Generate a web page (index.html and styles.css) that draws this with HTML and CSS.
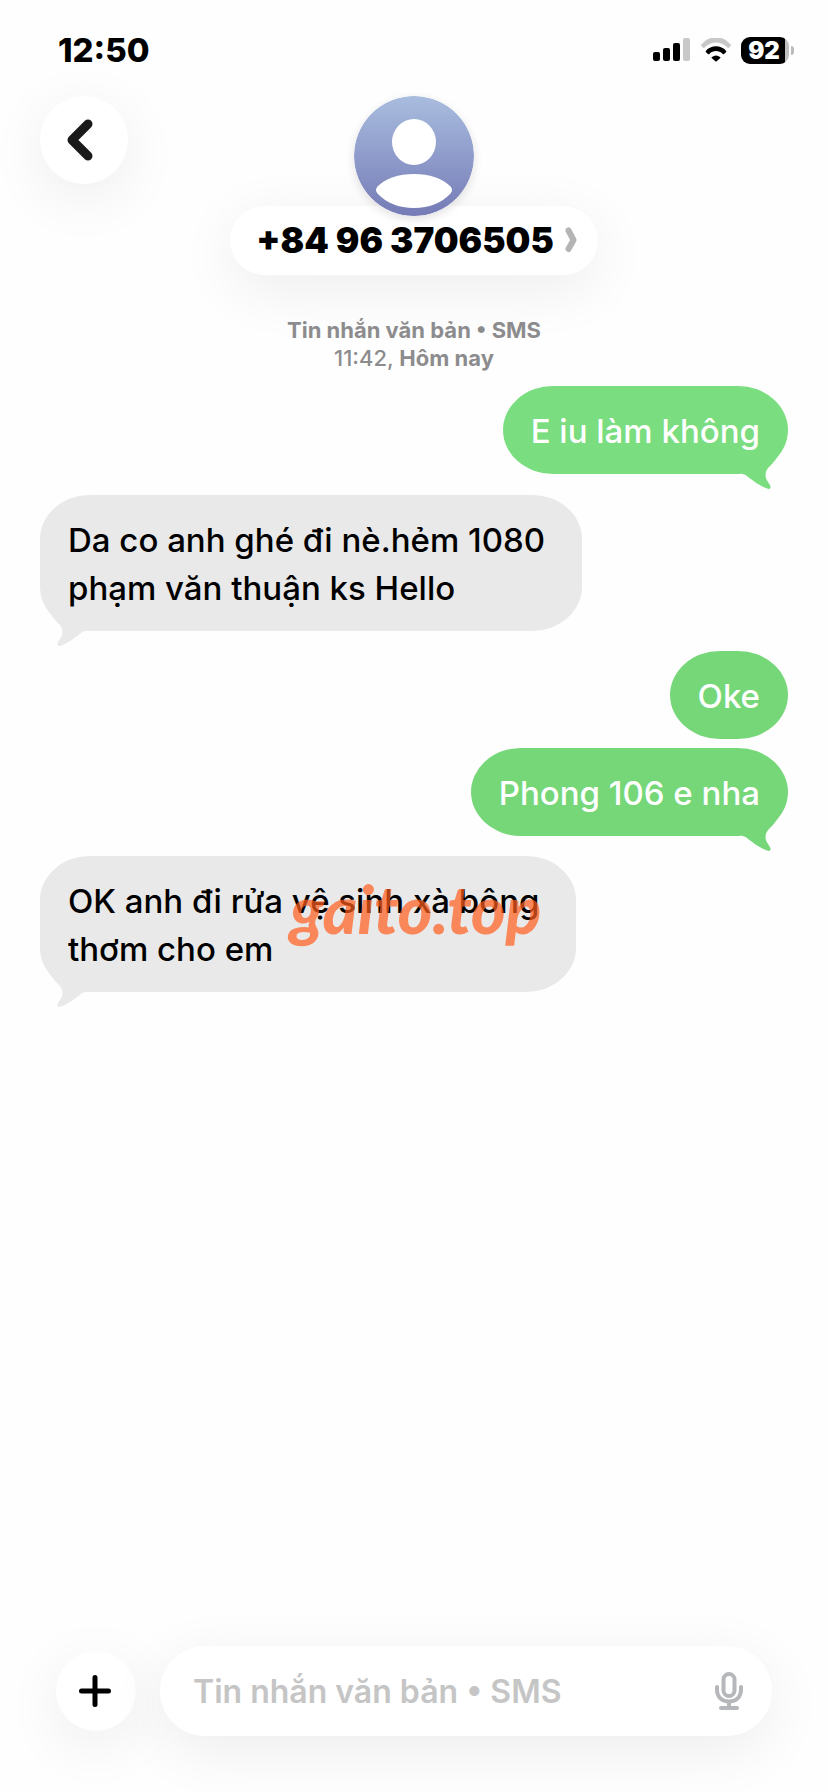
FILE: index.html
```html
<!DOCTYPE html>
<html lang="vi">
<head>
<meta charset="utf-8">
<meta name="viewport" content="width=device-width, initial-scale=1">
<title>+84 96 3706505</title>
<link rel="stylesheet" href="styles.css">
</head>
<body>
<div class="status-bar">
  <time class="clock">12:50</time>
  <div class="indicators">
    <svg class="signal" viewBox="0 0 38 24" aria-hidden="true">
      <rect x="0" y="14" width="7" height="9" rx="2"/>
      <rect x="10" y="10" width="7" height="13" rx="2"/>
      <rect x="20" y="5" width="7" height="18" rx="2"/>
      <rect class="dim" x="30" y="0" width="7" height="23" rx="2"/>
    </svg>
    <svg class="wifi" viewBox="0 0 32 24" aria-hidden="true">
      <path class="dim" d="M1.2 8.2C9.2-1.8 22.8-1.8 30.8 8.2Q31.300 8.900 30.600 9.500L28.800 11.200Q28 11.700 27.300 11C20.800 4.200 11.200 4.200 4.700 11Q4 11.700 3.200 11.200L1.400 9.500Q.7 8.900 1.200 8.200Z" transform="translate(0 -1.500)"/>
      <path d="M5.800 13C11 6.800 21 6.800 26.200 13Q26.600 13.600 26 14.200L24 16Q23.300 16.500 22.700 15.900C19 12.100 13 12.100 9.300 15.900Q8.700 16.500 8 16L6 14.200Q5.400 13.600 5.800 13Z"/>
      <path d="M11.700 19.200Q16 15.600 20.300 19.200Q20.700 19.600 20.300 20L16.700 23.200Q16 23.700 15.300 23.200L11.700 20Q11.300 19.600 11.700 19.200Z"/>
    </svg>
    <div class="battery"><span class="battery-level">92</span></div>
  </div>
</div>

<header class="chat-header">
  <button class="back" type="button" aria-label="Quay lại">
    <svg viewBox="0 0 28 44" aria-hidden="true"><path d="M22 6 6 22 22 38"/></svg>
  </button>
  <div class="contact">
    <svg class="avatar" viewBox="0 0 120 120" aria-hidden="true">
      <defs>
        <linearGradient id="sky" x1="0" y1="0" x2="0" y2="1">
          <stop offset="0" stop-color="#a9bddf"/>
          <stop offset="1" stop-color="#757bb6"/>
        </linearGradient>
      </defs>
      <circle cx="60" cy="60" r="60" fill="url(#sky)"/>
      <ellipse cx="60" cy="46" rx="22" ry="23" fill="#fff"/>
      <path fill="#fff" d="M23.500 90.500C31 82.500 45 78 60 78S89 82.500 96.500 90.500Q99.500 94 96.500 97.500C88 107 75 112 60 112S32 107 23.500 97.500Q20.500 94 23.500 90.500Z"/>
    </svg>
    <button class="contact-name" type="button">
      <span>+84 96 3706505</span>
      <svg viewBox="0 0 12 28" aria-hidden="true"><path d="M3.500 4.500 8.500 14 3.500 23"/></svg>
    </button>
  </div>
</header>

<main class="thread">
  <p class="stamp"><b>Tin nhắn văn bản • SMS</b><br>11:42, <b>Hôm nay</b></p>
  <div class="bubble sent light">E iu làm không
    <svg class="tail" viewBox="0 0 46 36" aria-hidden="true"><path d="M6 20C10 20 14 25 22 30 27 33 32 36 34 34.500 35.500 33 34 31 32 28 28 23 29 16 34 12 37 9 41 4 43 0L6 0Z"/></svg>
  </div>
  <div class="bubble received">Da co anh ghé đi nè.hẻm 1080<br>phạm văn thuận ks Hello
    <svg class="tail" viewBox="0 0 46 36" aria-hidden="true"><path d="M6 20C10 20 14 25 22 30 27 33 32 36 34 34.500 35.500 33 34 31 32 28 28 23 29 16 34 12 37 9 41 4 43 0L6 0Z"/></svg>
  </div>
  <div class="bubble sent">Oke</div>
  <div class="bubble sent follow">Phong 106 e nha
    <svg class="tail" viewBox="0 0 46 36" aria-hidden="true"><path d="M6 20C10 20 14 25 22 30 27 33 32 36 34 34.500 35.500 33 34 31 32 28 28 23 29 16 34 12 37 9 41 4 43 0L6 0Z"/></svg>
  </div>
  <div class="bubble received">OK anh đi rửa vệ sinh xà bông<br>thơm cho em
    <svg class="tail" viewBox="0 0 46 36" aria-hidden="true"><path d="M6 20C10 20 14 25 22 30 27 33 32 36 34 34.500 35.500 33 34 31 32 28 28 23 29 16 34 12 37 9 41 4 43 0L6 0Z"/></svg>
    <span class="watermark">gaito.top</span>
  </div>
</main>

<form class="composer">
  <button class="add" type="button" aria-label="Thêm">
    <svg viewBox="0 0 32 32" aria-hidden="true"><path d="M16 2.500V29.500M2.500 16H29.500"/></svg>
  </button>
  <div class="field">
    <input class="field-input" type="text" placeholder="Tin nhắn văn bản • SMS" aria-label="Tin nhắn văn bản">
    <button class="mic" type="button" aria-label="Đọc chính tả">
      <svg viewBox="0 0 28 38" aria-hidden="true">
        <rect x="8.500" y="2" width="11" height="22" rx="5.500"/>
        <path d="M2 15V17.500C2 25 7 29.500 14 29.500S26 25 26 17.500V15M14 29.500V36M6 36H22"/>
      </svg>
    </button>
  </div>
</form>
</body>
</html>
```
FILE: styles.css
```css
* {
  box-sizing: border-box;
}

body {
  display: flex;
  flex-direction: column;
  min-height: 100vh;
  margin: 0;
  overflow-x: hidden;
  background: #fefefe;
  color: #000;
  font-family: Inter, "Liberation Sans", sans-serif;
}

button,
input {
  margin: 0;
  padding: 0;
  border: 0;
  background: none;
  color: inherit;
  font: inherit;
}

svg {
  display: block;
}

.status-bar {
  display: flex;
  align-items: center;
  justify-content: space-between;
  height: 96px;
  padding: 4px 34px 0 58px;
}

.clock {
  font-size: 33px;
  font-weight: 800;
}

.indicators {
  display: flex;
  align-items: center;
  gap: 9px;
}

.signal {
  width: 38px;
  height: 24px;
}

.wifi {
  width: 32px;
  height: 24px;
}

.dim {
  fill: #c8c8c8;
}

.battery {
  position: relative;
  width: 48px;
  height: 27px;
  border-radius: 9px;
  margin-right: 5px;
  background: linear-gradient(90deg, #000 92%, #c0c0c0 92%);
  color: #fff;
  text-align: center;
}

.battery::after {
  content: "";
  position: absolute;
  top: 9px;
  right: -5px;
  width: 3px;
  height: 9px;
  border-radius: 0 4px 4px 0;
  background: #bbb;
}

.battery-level {
  display: block;
  padding-right: 2px;
  font-size: 24px;
  font-weight: 900;
  line-height: 27px;
}

.chat-header {
  display: grid;
  grid-template-columns: 88px 1fr 88px;
  align-items: start;
  padding: 0 40px;
}

.back,
.add,
.field,
.contact-name {
  background: #fff;
  box-shadow: 0 14px 60px rgba(0, 0, 0, 0.07);
}

.back {
  display: grid;
  place-items: center;
  width: 88px;
  height: 88px;
  padding-right: 8px;
  border-radius: 50%;
}

.back svg {
  width: 28px;
  height: 44px;
  fill: none;
  stroke: #1a1a1a;
  stroke-width: 9;
  stroke-linecap: round;
  stroke-linejoin: round;
}

.contact {
  display: flex;
  flex-direction: column;
  align-items: center;
}

.avatar {
  z-index: 1;
  width: 120px;
  height: 120px;
  margin-bottom: -10px;
  border-radius: 50%;
  box-shadow: 0 3px 10px rgba(0, 0, 0, 0.12);
}

.contact-name {
  display: flex;
  align-items: center;
  gap: 11px;
  height: 69px;
  padding: 0 21px 2px 26px;
  border-radius: 35px;
  font-size: 35px;
  font-weight: 900;
  white-space: nowrap;
}

.contact-name svg {
  width: 12px;
  height: 28px;
  fill: none;
  stroke: #b4b4b4;
  stroke-width: 6;
  stroke-linecap: round;
  stroke-linejoin: round;
}

.thread {
  display: flex;
  flex: 1;
  flex-direction: column;
  align-items: flex-start;
  padding: 41px 40px;
}

.stamp {
  align-self: center;
  margin: 0 0 14px;
  color: #8c8c8e;
  font-size: 22px;
  font-weight: 500;
  line-height: 28px;
  text-align: center;
}

.stamp b {
  font-weight: 700;
}

.bubble {
  position: relative;
  margin-bottom: 20px;
  padding: 21px 28px 19px;
  border-radius: 50px / 44px;
  font-size: 33px;
  font-weight: 500;
  line-height: 48px;
}

.sent {
  align-self: flex-end;
  background: #76d779;
  color: #fff;
  fill: #76d779;
}

.light {
  margin-bottom: 21px;
  background: #7add7f;
  fill: #7add7f;
}

.follow {
  margin-top: -11px;
}

.received {
  padding-right: 37px;
  background: #e9e9e9;
  fill: #e9e9e9;
}

.tail {
  position: absolute;
  right: 6px;
  bottom: -16px;
  width: 46px;
  height: 36px;
}

.received .tail {
  right: auto;
  left: 6px;
  transform: scaleX(-1);
}

.watermark {
  position: absolute;
  top: 20px;
  left: 250px;
  color: rgba(255, 92, 28, 0.7);
  font-family: "Lato", cursive;
  font-size: 66px;
  font-style: italic;
  font-weight: 900;
  line-height: 66px;
}

.composer {
  display: flex;
  align-items: center;
  gap: 24px;
  padding: 0 56px;
  margin-bottom: 56px;
}

.add {
  display: grid;
  flex: none;
  place-items: center;
  width: 80px;
  height: 80px;
  padding-right: 2px;
  border-radius: 50%;
}

.add svg {
  width: 32px;
  height: 32px;
  fill: none;
  stroke: #000;
  stroke-width: 5;
  stroke-linecap: round;
}

.field {
  display: flex;
  flex: 1;
  align-items: center;
  height: 90px;
  padding: 0 29px 0 33px;
  border-radius: 45px;
}

.field-input {
  flex: 1;
  min-width: 0;
  height: 60px;
  outline: 0;
  font-size: 32px;
  font-weight: 600;
}

.field-input::placeholder {
  color: #c5c5c5;
  opacity: 1;
}

.mic svg {
  width: 28px;
  height: 38px;
  fill: none;
  stroke: #b6b7bb;
  stroke-width: 4;
  stroke-linecap: round;
}
```
